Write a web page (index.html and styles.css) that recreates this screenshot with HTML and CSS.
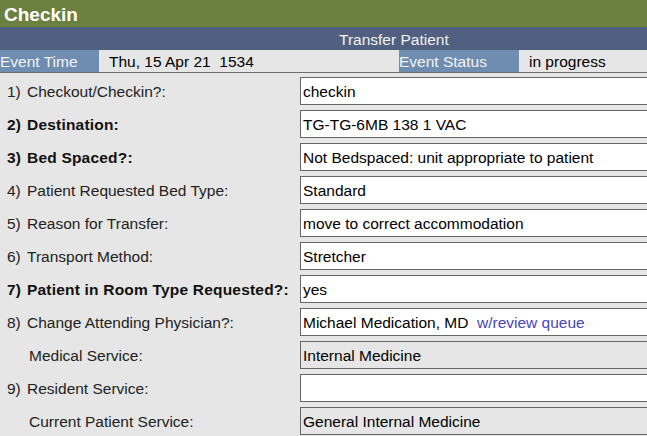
FILE: index.html
```html
<!DOCTYPE html>
<html>
<head>
<meta charset="utf-8">
<link rel="stylesheet" href="styles.css">
</head>
<body>
<div class="page">
  <div class="title">Checkin</div>
  <div class="subbar">Transfer Patient</div>
  <div class="event-row">
    <div class="ev-label ev-time-label">Event Time</div>
    <div class="ev-value ev-time-value">Thu, 15 Apr 21&nbsp; 1534</div>
    <div class="ev-label ev-status-label">Event Status</div>
    <div class="ev-value ev-status-value">in progress</div>
  </div>
  <div class="rule"></div>
  <div class="form">
    <div class="row">
      <div class="label"><span class="num">1)</span>Checkout/Checkin?:</div>
      <div class="box">checkin</div>
    </div>
    <div class="row">
      <div class="label strong"><span class="num">2)</span>Destination:</div>
      <div class="box">TG-TG-6MB 138 1 VAC</div>
    </div>
    <div class="row">
      <div class="label strong"><span class="num">3)</span>Bed Spaced?:</div>
      <div class="box">Not Bedspaced: unit appropriate to patient</div>
    </div>
    <div class="row">
      <div class="label"><span class="num">4)</span>Patient Requested Bed Type:</div>
      <div class="box">Standard</div>
    </div>
    <div class="row">
      <div class="label"><span class="num">5)</span>Reason for Transfer:</div>
      <div class="box">move to correct accommodation</div>
    </div>
    <div class="row">
      <div class="label"><span class="num">6)</span>Transport Method:</div>
      <div class="box">Stretcher</div>
    </div>
    <div class="row">
      <div class="label strong"><span class="num">7)</span>Patient in Room Type Requested?:</div>
      <div class="box">yes</div>
    </div>
    <div class="row">
      <div class="label"><span class="num">8)</span>Change Attending Physician?:</div>
      <div class="box">Michael Medication, MD&nbsp; <span class="link">w/review queue</span></div>
    </div>
    <div class="row">
      <div class="label sub">Medical Service:</div>
      <div class="box readonly">Internal Medicine</div>
    </div>
    <div class="row">
      <div class="label"><span class="num">9)</span>Resident Service:</div>
      <div class="box"></div>
    </div>
    <div class="row">
      <div class="label sub">Current Patient Service:</div>
      <div class="box readonly">General Internal Medicine</div>
    </div>
  </div>
</div>
</body>
</html>
```
FILE: styles.css
```css
html, body {
  margin: 0;
  padding: 0;
}
body {
  background: #e6e6e6;
  font-family: "Liberation Sans", Arial, sans-serif;
  font-size: 15.5px;
  color: #000;
  overflow: hidden;
}
.page {
  width: 647px;
  overflow: hidden;
}
.title {
  box-sizing: border-box;
  height: 27px;
  line-height: 28px;
  padding-top: 1px;
  background: #6b7f3f;
  color: #ffffff;
  font-weight: bold;
  font-size: 19px;
  padding-left: 4px;
}
.subbar {
  box-sizing: border-box;
  height: 23px;
  line-height: 23px;
  padding-top: 1px;
  background: #516080;
  color: #f2f2f2;
  padding-left: 339px;
}
.event-row {
  display: flex;
  height: 22px;
  line-height: 23px;
}
.ev-label {
  background: #6f8db0;
  color: #f4f4f4;
}
.ev-time-label {
  width: 99px;
}
.ev-time-value {
  width: 290px;
  padding-left: 10px;
}
.ev-status-label {
  width: 120px;
}
.ev-status-value {
  flex: 1;
  padding-left: 10px;
}
.rule {
  height: 0;
  border-top: 1px solid #6e6e6e;
}
.form {
  display: flex;
  flex-direction: column;
  gap: 5px;
  padding-top: 4px;
}
.row {
  display: grid;
  grid-template-columns: 300px 360px;
  height: 28px;
}
.label {
  display: flex;
  align-items: center;
  padding-left: 7px;
  padding-top: 2px;
  color: #222;
  white-space: nowrap;
}
.label.strong {
  font-weight: bold;
  color: #111;
  letter-spacing: 0.2px;
}
.label.sub {
  padding-left: 29px;
}
.num {
  display: inline-block;
  width: 20px;
}
.box {
  box-sizing: border-box;
  height: 28px;
  line-height: 26px;
  padding-top: 1px;
  border: 1px solid #666;
  background: #ffffff;
  padding-left: 2px;
  white-space: nowrap;
  overflow: hidden;
}
.box.readonly {
  background: #e6e6e6;
}
.link {
  color: #4646c0;
}
```
